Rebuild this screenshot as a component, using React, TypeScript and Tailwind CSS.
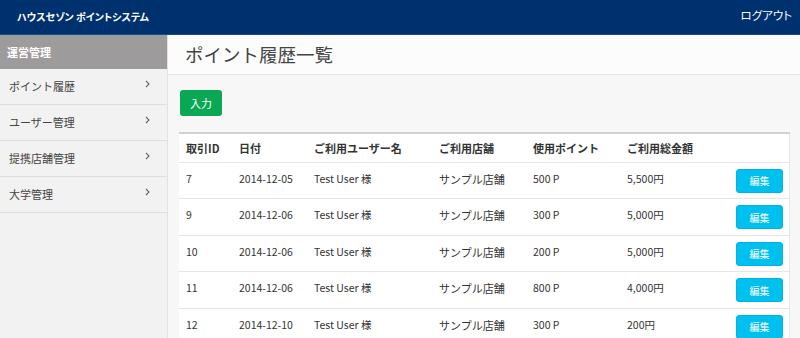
const rows = [
  { id: "7", date: "2014-12-05", point: "500 P", total: "5,500円" },
  { id: "9", date: "2014-12-06", point: "300 P", total: "5,000円" },
  { id: "10", date: "2014-12-06", point: "200 P", total: "5,000円" },
  { id: "11", date: "2014-12-06", point: "800 P", total: "4,000円" },
  { id: "12", date: "2014-12-10", point: "300 P", total: "200円" },
];

const menu = ["ポイント履歴", "ユーザー管理", "提携店舗管理", "大学管理"];

function Chevron() {
  return (
    <svg width="5" height="8" viewBox="0 0 5 8" className="-mt-[5px]">
      <path d="M1 1l3 3-3 3" fill="none" stroke="#666" strokeWidth="1.1" />
    </svg>
  );
}

export default function App() {
  return (
    <div className="h-[338px] w-[800px] overflow-hidden bg-[#f7f7f7] font-['Noto_Sans_CJK_JP',sans-serif] text-[11px] text-[#333]">
      <header className="flex h-[35px] items-center justify-between border-b border-[#1c4a86] bg-[#00316f] pb-[2px] pl-[17px] pr-[8px] text-white">
        <span className="text-[10px] font-bold [font-feature-settings:'palt']">
          ハウスセゾン ポイントシステム
        </span>
        <span className="text-[11.5px] [font-feature-settings:'palt']">ログアウト</span>
      </header>
      <div className="flex h-[303px]">
        <aside className="w-[168px] shrink-0 border-r border-[#e2e2e2] bg-[#f2f2f2]">
          <div className="flex h-[34px] items-center bg-[#9d9b9b] px-[7px] text-[11px] font-bold text-white">
            運営管理
          </div>
          {menu.map((m) => (
            <div
              key={m}
              className="flex h-[36px] items-center justify-between border-b border-[#dddddd] pl-[9px] pr-[17px] text-[11px] text-[#444]"
            >
              <span>{m}</span>
              <Chevron />
            </div>
          ))}
        </aside>
        <main className="flex-1">
          <div className="flex h-[40px] items-center border-b border-[#e6e6e6] bg-[#fcfcfc] px-[17px] text-[18.5px] text-[#444]">
            ポイント履歴一覧
          </div>
          <div className="px-[11px] pt-[15px]">
            <button className="ml-[1px] h-[26px] w-[42px] rounded-[3px] bg-[#0aa755] text-[11px] text-white">
              入力
            </button>
            <table className="mt-[16px] w-[611px] border-collapse bg-white">
              <thead>
                <tr className="h-[29px] border-t-2 border-[#d2d2d2] text-left font-bold text-[#333]">
                  <th className="w-[53px] pl-[7px] font-bold">取引ID</th>
                  <th className="w-[75px] pl-[7px] font-bold">日付</th>
                  <th className="w-[125px] pl-[7px] font-bold">ご利用ユーザー名</th>
                  <th className="w-[94px] pl-[7px] font-bold">ご利用店舗</th>
                  <th className="w-[94px] pl-[7px] font-bold">使用ポイント</th>
                  <th className="w-[108px] pl-[7px] font-bold">ご利用総金額</th>
                  <th className="border-r border-[#e6e6e6]"></th>
                </tr>
              </thead>
              <tbody>
                {rows.map((r) => (
                  <tr key={r.id} className="h-[36.5px] border-t border-[#e6e6e6] align-top text-[10.5px]">
                    <td className="pl-[7px] pt-[8px]">{r.id}</td>
                    <td className="pl-[7px] pt-[8px]">{r.date}</td>
                    <td className="pl-[7px] pt-[8px]">Test User 様</td>
                    <td className="pl-[7px] pt-[8px] text-[11px]">サンプル店舗</td>
                    <td className="pl-[7px] pt-[8px]">{r.point}</td>
                    <td className="pl-[7px] pt-[8px]">{r.total}</td>
                    <td className="border-r border-[#e6e6e6] pr-[6px] pt-[6px] text-right">
                      <button className="h-[24px] w-[47px] rounded-[3px] border border-[#00b3e0] bg-[#00c0ef] text-[10px] text-white">
                        編集
                      </button>
                    </td>
                  </tr>
                ))}
              </tbody>
            </table>
          </div>
        </main>
      </div>
    </div>
  );
}
